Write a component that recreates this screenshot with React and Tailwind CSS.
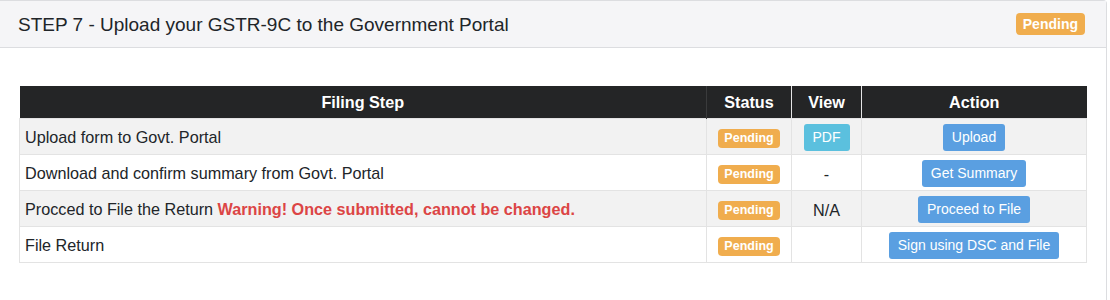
import React from "react";

function Badge({ big }) {
  return (
    <span
      className={
        "inline-block rounded-[4px] bg-[#f0ad4e] font-bold text-white leading-none " +
        (big ? "px-[7px] py-[4px] text-[14px]" : "px-[6px] py-[3px] text-[12.5px]")
      }
    >
      Pending
    </span>
  );
}

function Btn({ children, info }) {
  return (
    <span
      className={
        "inline-block rounded-[3px] px-[9px] py-[6px] text-[14px] leading-[15px] text-white align-middle " +
        (info ? "bg-[#5bc0de]" : "bg-[#5a9fe1]")
      }
    >
      {children}
    </span>
  );
}

const rows = [
  { step: "Upload form to Govt. Portal", view: "pdf", action: "Upload" },
  { step: "Download and confirm summary from Govt. Portal", view: "-", action: "Get Summary" },
  {
    step: "Procced to File the Return",
    warn: "Warning! Once submitted, cannot be changed.",
    view: "N/A",
    action: "Proceed to File",
  },
  { step: "File Return", view: "", action: "Sign using DSC and File" },
];

export default function App() {
  return (
    <div
      className="h-[300px] w-[1110px] bg-white text-[#212529]"
      style={{ fontFamily: '"Liberation Sans", Arial, sans-serif' }}
    >
      <div className="w-[1107px] rounded-tr-[4px] border-t border-r border-[#dcdde0] bg-white">
        <div className="flex h-[47px] items-center justify-between border-b border-[#dcdde0] bg-[#f5f5f7] pl-[18px] pr-[21px]">
          <div className="text-[19px] leading-none text-[#212529]">
            STEP 7 - Upload your GSTR-9C to the Government Portal
          </div>
          <Badge big />
        </div>
        <div className="pl-[19px] pr-[19px] pt-[38px] pb-[37px]">
          <table className="w-[1068px] border-collapse text-[16.2px] leading-[18px]">
            <thead>
              <tr className="h-[32px] bg-[#242526] font-bold text-white">
                <th className="border-r border-[#3a3b3c] px-[6px] text-center">Filing Step</th>
                <th className="w-[85px] border-r border-[#e5e5e5] px-[6px] text-center">Status</th>
                <th className="w-[70px] border-r border-[#e5e5e5] px-[6px] text-center">View</th>
                <th className="w-[225px] px-[6px] text-center">Action</th>
              </tr>
            </thead>
            <tbody>
              {rows.map((r, i) => (
                <tr
                  key={i}
                  className={"h-[36px] " + (i % 2 === 0 ? "bg-[#f2f2f2]" : "bg-white")}
                >
                  <td className="border border-[#e3e3e3] px-[5px] pt-[2px]">
                    {r.step}
                    {r.warn && (
                      <span className="font-bold text-[#dc4545]"> {r.warn}</span>
                    )}
                  </td>
                  <td className="border border-[#e3e3e3] text-center pt-[3px]">
                    <Badge />
                  </td>
                  <td className="border border-[#e3e3e3] text-center pt-[3px]">
                    {r.view === "pdf" ? <Btn info>PDF</Btn> : r.view}
                  </td>
                  <td className="border border-[#e3e3e3] text-center pt-[3px]">
                    <Btn>{r.action}</Btn>
                  </td>
                </tr>
              ))}
            </tbody>
          </table>
        </div>
      </div>
    </div>
  );
}
